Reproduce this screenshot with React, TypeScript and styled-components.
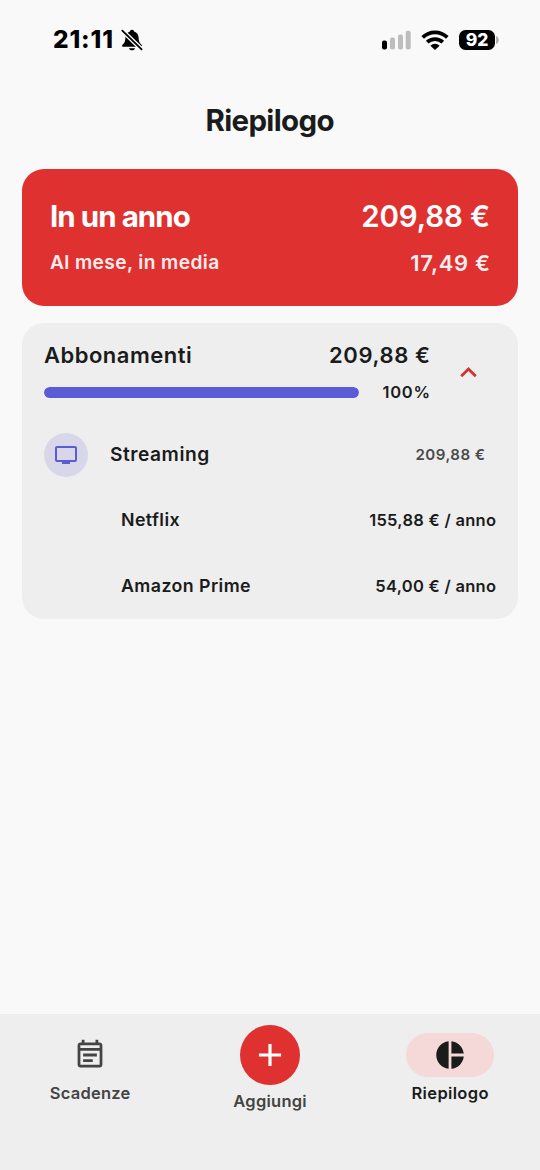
import React from "react";
import styled, { createGlobalStyle } from "styled-components";

const GlobalStyle = createGlobalStyle`
  * { box-sizing: border-box; }
  body {
    margin: 0;
    background: #f9f9f9;
    font-family: Inter, "Liberation Sans", sans-serif;
    color: #1a1c1c;
  }
`;

const Screen = styled.div`
  width: 540px;
  height: 1170px;
  display: flex;
  flex-direction: column;
  background: #f9f9f9;
  overflow: hidden;
`;

const StatusBar = styled.header`
  height: 80px;
  display: flex;
  align-items: center;
  justify-content: space-between;
  padding: 0 41px 0 53px;
  color: #000;
`;

const StatusGroup = styled.div<{ $gap: number }>`
  display: flex;
  align-items: center;
  gap: ${(p) => p.$gap}px;
`;

const Label = styled.span<{ $size: number; $weight?: number; $spacing?: number; $color?: string }>`
  margin: 0;
  font-size: ${(p) => p.$size}px;
  font-weight: ${(p) => p.$weight ?? 600};
  letter-spacing: ${(p) => p.$spacing ?? 0}px;
  margin-right: ${(p) => -(p.$spacing ?? 0)}px;
  color: ${(p) => p.$color ?? "inherit"};
  line-height: 1.3;
  white-space: nowrap;
`;

const Clock = styled(Label)`
  width: 63px;
  margin-right: 0;
`;

const BatteryLevel = styled.div`
  display: flex;
  align-items: center;
  gap: 1px;
`;

const BatteryBody = styled.div`
  width: 36px;
  height: 20px;
  border-radius: 6.5px;
  background: #000;
  color: #fff;
  display: flex;
  align-items: center;
  justify-content: center;
`;

const TitleBar = styled.div`
  height: 89px;
  display: flex;
  justify-content: center;
  padding-top: 21px;
`;

const Content = styled.main`
  flex: 1;
  display: flex;
  flex-direction: column;
  gap: 17px;
  padding: 0 22px;
`;

const TotalCard = styled.section`
  height: 137px;
  border-radius: 22px;
  background: #df3130;
  color: #fff;
  display: flex;
  flex-direction: column;
  justify-content: center;
  gap: 10px;
  padding: 0 28px;
`;

const TotalLine = styled.div<{ $height: number }>`
  height: ${(p) => p.$height}px;
  display: flex;
  align-items: center;
  justify-content: space-between;
`;

const MonthlyAmount = styled(Label)`
  padding-top: 2px;
`;

const CategoryCard = styled.section`
  height: 296px;
  border-radius: 22px;
  background: #eeeeee;
  display: flex;
  flex-direction: column;
`;

const CategoryHeader = styled.div`
  height: 98px;
  display: flex;
  align-items: center;
  padding: 0 33px 0 22px;
`;

const CategorySummary = styled.div`
  width: 386px;
  padding-top: 2px;
  display: flex;
  flex-direction: column;
  gap: 9px;
`;

const SummaryLine = styled.div<{ $height: number }>`
  height: ${(p) => p.$height}px;
  display: flex;
  align-items: center;
  justify-content: space-between;
`;

const Track = styled.div`
  width: 315px;
  height: 11px;
  border-radius: 6px;
  background: #dcdbe8;
  overflow: hidden;
`;

const Fill = styled.div`
  height: 100%;
  border-radius: inherit;
  background: #5b5bd7;
`;

const Toggle = styled.button`
  margin-left: auto;
  width: 33px;
  height: 33px;
  padding: 0;
  border: 0;
  background: none;
`;

const GroupRow = styled.div`
  height: 66px;
  display: flex;
  align-items: center;
  padding: 1px 33px 0 22px;
`;

const GroupIcon = styled.div`
  width: 44px;
  height: 44px;
  margin-right: 22px;
  padding-top: 1px;
  border-radius: 50%;
  background: #d8d7ea;
  display: flex;
  align-items: center;
  justify-content: center;
`;

const Spacer = styled.div`
  flex: 1;
`;

const ItemRow = styled.div`
  height: 66px;
  display: flex;
  align-items: center;
  justify-content: space-between;
  padding: 0 22px 0 99px;
`;

const ItemPrice = styled(Label)`
  padding-top: 2px;
`;

const NavBar = styled.nav`
  height: 156.5px;
  background: #eeeeee;
  display: grid;
  grid-template-columns: repeat(3, 1fr);
`;

const NavItem = styled.div<{ $top: number; $gap: number }>`
  display: flex;
  flex-direction: column;
  align-items: center;
  padding-top: ${(p) => p.$top}px;
  gap: ${(p) => p.$gap}px;
`;

const NavPill = styled.div<{ $active?: boolean }>`
  width: 88px;
  height: 44px;
  border-radius: 22px;
  background: ${(p) => (p.$active ? "#f5d8d8" : "transparent")};
  display: flex;
  align-items: center;
  justify-content: center;
`;

const AddButton = styled.div`
  width: 60px;
  height: 60px;
  border-radius: 50%;
  background: #df3130;
  display: flex;
  align-items: center;
  justify-content: center;
`;

const Svg = styled.svg`
  display: block;
  flex: none;
`;

const items = [
  { name: "Netflix", price: "155,88 € / anno" },
  { name: "Amazon Prime", price: "54,00 € / anno" },
];

function MutedBell() {
  return (
    <Svg width="22" height="22" viewBox="0 0 22 22">
      <path
        d="M11 .8c-1.2 0-2 .8-2.100 1.800C6 3.500 4.500 5.800 4.400 8.700c-.1 3.300-.7 4.900-2.200 6.200-.8.700-1.200 1.300-1.200 2 0 .5.400.8 1 .8h18c.6 0 1-.3 1-.8 0-.7-.4-1.300-1.200-2-1.500-1.300-2.100-2.900-2.200-6.200-.1-2.900-1.600-5.200-4.500-6.100C13 1.600 12.200.8 11 .8zM8 19.200h6c-.3 1.300-1.500 2.100-3 2.100s-2.700-.8-3-2.100z"
        fill="#000"
      />
      <path d="M1 1.300 21 20.700" stroke="#f9f9f9" strokeWidth="4.400" />
      <path d="M1.300 1.600 20.600 20.300" stroke="#000" strokeWidth="1.800" strokeLinecap="round" />
    </Svg>
  );
}

function Signal() {
  return (
    <Svg width="29" height="20" viewBox="0.500 0 29 20">
      <rect x="0.500" y="10.500" width="5" height="9" rx="2" fill="#000" />
      <rect x="8.500" y="7.500" width="5" height="12" rx="2" fill="#bdbdbd" />
      <rect x="16.500" y="4.500" width="5" height="15" rx="2" fill="#bdbdbd" />
      <rect x="24.200" y="0.800" width="5" height="18.700" rx="2" fill="#bdbdbd" />
    </Svg>
  );
}

function Wifi() {
  return (
    <Svg width="28" height="20" viewBox="0 0 28 20">
      <g fill="none" stroke="#000" strokeWidth="3.700">
        <path d="M1.700 7.400a17.500 17.500 0 0 1 24.600 0" />
        <path d="M6.200 12.200a11.200 11.200 0 0 1 15.600 0" />
      </g>
      <path d="M14 20l-4.600-4.300a6.500 6.500 0 0 1 9.200 0z" fill="#000" />
    </Svg>
  );
}

function App() {
  return (
    <>
      <GlobalStyle />
      <Screen>
        <StatusBar>
          <StatusGroup $gap={5}>
            <Clock $size={24.4} $weight={800} $spacing={0.9}>21:11</Clock>
            <MutedBell />
          </StatusGroup>
          <StatusGroup $gap={10}>
            <Signal />
            <Wifi />
            <BatteryLevel>
              <BatteryBody>
                <Label $size={17.5} $weight={800}>92</Label>
              </BatteryBody>
              <Svg width="3" height="8" viewBox="0 0 3 8">
                <path d="M0 0c1.800.6 2.800 2.100 2.800 4S1.800 7.400 0 8z" fill="#b0b0b0" />
              </Svg>
            </BatteryLevel>
          </StatusGroup>
        </StatusBar>

        <TitleBar>
          <Label as="h1" $size={29.5} $weight={700} $spacing={-0.65}>Riepilogo</Label>
        </TitleBar>

        <Content>
          <TotalCard>
            <TotalLine $height={40}>
              <Label $size={29.5} $weight={700} $spacing={-0.95}>In un anno</Label>
              <Label $size={29.5} $spacing={-0.15}>209,88 €</Label>
            </TotalLine>
            <TotalLine $height={32}>
              <Label $size={19.2} $spacing={0.38} $color="#fdecec">Al mese, in media</Label>
              <MonthlyAmount $size={22} $spacing={0.7} $color="#fdf0f0">17,49 €</MonthlyAmount>
            </TotalLine>
          </TotalCard>

          <CategoryCard>
            <CategoryHeader>
              <CategorySummary>
                <SummaryLine $height={30}>
                  <Label $size={22} $spacing={0.5}>Abbonamenti</Label>
                  <Label $size={22} $spacing={0.6}>209,88 €</Label>
                </SummaryLine>
                <SummaryLine $height={26}>
                  <Track>
                    <Fill style={{ width: "100%" }} />
                  </Track>
                  <Label $size={16.5} $spacing={0.7}>100%</Label>
                </SummaryLine>
              </CategorySummary>
              <Toggle aria-label="Comprimi">
                <Svg width="33" height="33" viewBox="0 0 24 24">
                  <path d="m12 8-6 6 1.410 1.410L12 10.830l4.590 4.580L18 14z" fill="#d63232" />
                </Svg>
              </Toggle>
            </CategoryHeader>
            <GroupRow>
              <GroupIcon>
                <Svg width="24" height="24" viewBox="0 0 24 24">
                  <path
                    d="M21 3H3c-1.100 0-2 .9-2 2v12c0 1.100.9 2 2 2h5v2h8v-2h5c1.100 0 1.990-.9 1.990-2L23 5c0-1.100-.9-2-2-2zm0 14H3V5h18v12z"
                    fill="#5b5bd7"
                  />
                </Svg>
              </GroupIcon>
              <Label $size={19.2} $spacing={0.52}>Streaming</Label>
              <Spacer />
              <Label $size={15.1} $spacing={0.45} $color="#4a4a4a">209,88 €</Label>
            </GroupRow>
            {items.map((item) => (
              <ItemRow key={item.name}>
                <Label $size={17.8} $spacing={0.42}>{item.name}</Label>
                <ItemPrice $size={16.5} $spacing={0.28}>{item.price}</ItemPrice>
              </ItemRow>
            ))}
          </CategoryCard>
        </Content>

        <NavBar>
          <NavItem $top={19} $gap={6.5}>
            <NavPill>
              <Svg width="34" height="34" viewBox="-0.360 -0.360 24.720 24.720">
                <path
                  d="M19 3h-1V1h-2v2H8V1H6v2H5c-1.110 0-2 .9-2 2v14c0 1.100.89 2 2 2h14c1.100 0 2-.9 2-2V5c0-1.100-.9-2-2-2zm0 16H5V9h14v10zm0-12H5V5h14v2zM7 11h10v2H7zm0 4h7v2H7z"
                  fill="#444"
                />
              </Svg>
            </NavPill>
            <Label $size={16.5} $spacing={0.25} $color="#444">Scadenze</Label>
          </NavItem>
          <NavItem $top={11} $gap={6}>
            <AddButton>
              <Svg width="38" height="38" viewBox="0 0 24 24">
                <path d="M19 13h-6v6h-2v-6H5v-2h6V5h2v6h6v2z" fill="#fff" />
              </Svg>
            </AddButton>
            <Label $size={16.5} $spacing={0.25} $color="#444">Aggiungi</Label>
          </NavItem>
          <NavItem $top={19} $gap={6.5}>
            <NavPill $active>
              <Svg width="34" height="34" viewBox="-0.360 -0.360 24.720 24.720">
                <path
                  d="M11 2v20c-5.070-.5-9-4.790-9-10s3.930-9.500 9-10zm2.030 0v8.990H22c-.47-4.740-4.240-8.520-8.970-8.990zm0 11.010V22c4.740-.47 8.500-4.250 8.970-8.990h-8.970z"
                  fill="#1a1c1c"
                />
              </Svg>
            </NavPill>
            <Label $size={16.5} $spacing={0.35}>Riepilogo</Label>
          </NavItem>
        </NavBar>
      </Screen>
    </>
  );
}

export default App;
